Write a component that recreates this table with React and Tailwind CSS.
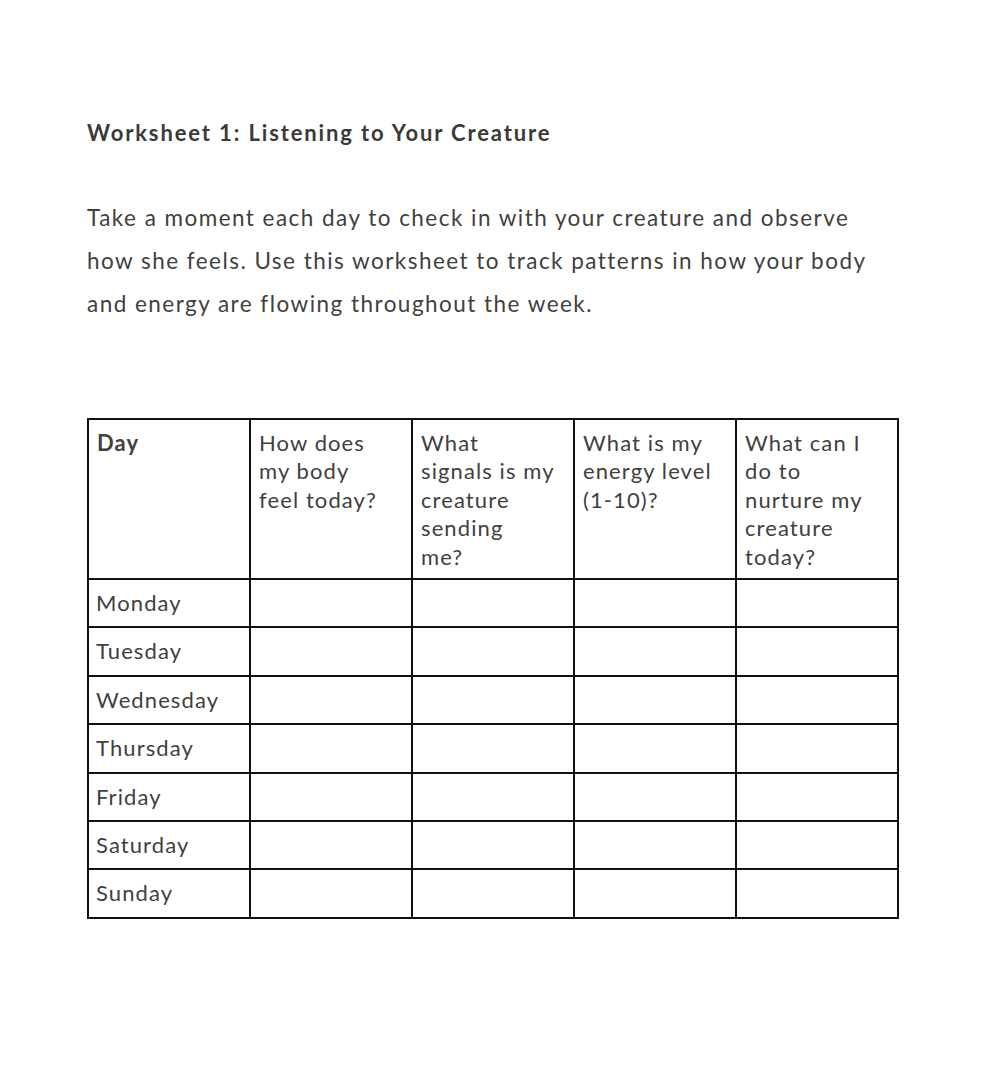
import React from 'react';

const days = ['Monday', 'Tuesday', 'Wednesday', 'Thursday', 'Friday', 'Saturday', 'Sunday'];
const questions = [
    ['How does', 'my body', 'feel today?'],
    ['What', 'signals is my', 'creature', 'sending', 'me?'],
    ['What is my', 'energy level', '(1-10)?'],
    ['What can I', 'do to', 'nurture my', 'creature', 'today?']
];
const intro = [
    'Take a moment each day to check in with your creature and observe',
    'how she feels. Use this worksheet to track patterns in how your body',
    'and energy are flowing throughout the week.'
];

function App() {
    return (
        <div className="min-h-[1088px] w-[988px] bg-white text-[#404040] font-['Lato',sans-serif]">
            <div className="pl-[87px] pt-[117px]">
                <h1 className="text-[22px] font-bold leading-[32px] tracking-[0.085em] text-[#3a3a3a]">Worksheet 1: Listening to Your Creature</h1>

                <p className="mt-[47px] w-[880px] text-[22.5px] leading-[43px] tracking-[0.065em] whitespace-nowrap">
                    {intro.map(line => <span key={line} className="block">{line}</span>)}
                </p>

                <table className="mt-[93px] w-[812px] table-fixed border-collapse text-[22px] leading-[28.4px] tracking-[0.05em]">
                    <thead>
                        <tr>
                            <th className="border-2 border-[#111] px-2 pt-[9px] pb-[7px] text-left align-top font-bold">Day</th>
                            {questions.map(q => (
                                <th key={q[0] + q[1]} className="border-2 border-[#111] px-2 pt-[9px] pb-[7px] text-left align-top font-normal whitespace-nowrap">
                                    {q.map(l => <span key={l} className="block">{l}</span>)}
                                </th>
                            ))}
                        </tr>
                    </thead>
                    <tbody>
                        {days.map(day => (
                            <tr key={day}>
                                <td className="border-2 border-[#111] pl-[7px] pr-2 py-[9px]">{day}</td>
                                <td className="border-2 border-[#111]"></td>
                                <td className="border-2 border-[#111]"></td>
                                <td className="border-2 border-[#111]"></td>
                                <td className="border-2 border-[#111]"></td>
                            </tr>
                        ))}
                    </tbody>
                </table>
            </div>
        </div>
    );
}

export default App;
